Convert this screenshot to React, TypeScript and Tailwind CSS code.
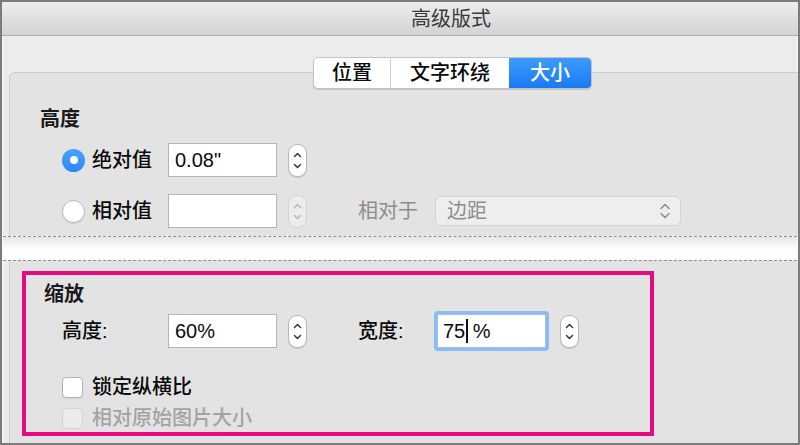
import React from "react";

const FONT = { fontFamily: '"Liberation Sans", "Noto Sans CJK SC", sans-serif' };

function Stepper({ disabled = false }: { disabled?: boolean }) {
  const stroke = disabled ? "#b9b9b9" : "#3a3a3a";
  return (
    <div
      className={`ml-[11px] flex h-[33px] w-[19px] items-center justify-center rounded-[9px] border ${
        disabled ? "border-[#d4d4d4] bg-[#ececec]" : "border-[#b9b9b9] bg-white shadow-[0_1px_1px_rgba(0,0,0,0.12)]"
      }`}
    >
      <svg width="11" height="25" viewBox="0 0 11 25" fill="none">
        <path d="M2.5 8.5 L5.5 5.5 L8.5 8.5" stroke={stroke} strokeWidth="1.5" strokeLinecap="round" strokeLinejoin="round" />
        <path d="M2.5 16.5 L5.5 19.5 L8.5 16.5" stroke={stroke} strokeWidth="1.5" strokeLinecap="round" strokeLinejoin="round" />
      </svg>
    </div>
  );
}

function TextBox({ children, disabled = false }: { children?: React.ReactNode; disabled?: boolean }) {
  return (
    <div
      className={`flex h-[34px] w-[109px] items-center border px-[6px] text-[20px] text-[#0a0a0a] ${
        disabled ? "border-[#d2d2d2] bg-[#f4f4f4]" : "border-[#b5b5b5] bg-white"
      }`}
    >
      {children}
    </div>
  );
}

export default function App() {
  return (
    <div
      className="flex h-[445px] w-[800px] flex-col overflow-hidden border-2 border-[#7b7b7b] bg-[#ececec]"
      style={FONT}
    >
      {/* Title bar */}
      <div className="flex h-[34px] shrink-0 items-center border-b border-[#b1b1b1] bg-gradient-to-b from-[#ededed] to-[#d3d3d3] pl-[409px] text-[20px] text-[#3a3a3a]">
        高级版式
      </div>

      {/* Body */}
      <div className="flex flex-1 flex-col border-x border-[#f8f8f8]">
        {/* Tabs */}
        <div className="relative z-10 flex pl-[310px] pt-[21px]">
          <div className="flex h-[32px] overflow-hidden rounded-[5px] border border-[#c2c2c2] bg-white text-[20px] font-medium text-[#0a0a0a] shadow-[0_1px_1px_rgba(0,0,0,0.15)]">
            <div className="flex w-[77px] items-center justify-center border-r border-[#d0d0d0]">位置</div>
            <div className="flex w-[118px] items-center justify-center">文字环绕</div>
            <div className="flex w-[82px] items-center justify-center bg-gradient-to-b from-[#3d9bfd] to-[#1979f4] text-white">
              大小
            </div>
          </div>
        </div>

        {/* Group box top part */}
        <div className="-mr-[20px] -mt-[17px] ml-[6px] h-[164px] shrink-0 rounded-tl-[6px] border border-b-0 border-[#cdcdcd] bg-[#e3e3e3] pl-[30px] pt-[34px]">
          <div className="h-[24px] text-[20px] font-semibold leading-[24px] text-[#1a1a1a]">高度</div>

          {/* Row 1 */}
          <div className="mt-[12px] flex h-[34px] items-center pl-[22px]">
            <div className="flex w-[106px] items-center">
              <div className="flex h-[23px] w-[23px] items-center justify-center rounded-full bg-gradient-to-b from-[#4aa3fd] to-[#2a86f6]">
                <div className="h-[8px] w-[8px] rounded-full bg-white" />
              </div>
              <span className="ml-[7px] text-[20px] font-medium text-[#0a0a0a]">绝对值</span>
            </div>
            <TextBox>0.08"</TextBox>
            <Stepper />
          </div>

          {/* Row 2 */}
          <div className="mt-[17px] flex h-[34px] items-center pl-[22px]">
            <div className="flex w-[106px] items-center">
              <div className="h-[23px] w-[23px] rounded-full border border-[#b8b8b8] bg-white shadow-[0_1px_1px_rgba(0,0,0,0.08)]" />
              <span className="ml-[7px] text-[20px] font-medium text-[#0a0a0a]">相对值</span>
            </div>
            <TextBox />
            <Stepper disabled />
            <span className="ml-[51px] w-[77px] text-[20px] text-[#8c8c8c]">相对于</span>
            <div className="flex h-[30px] w-[246px] items-center justify-between rounded-[6px] border border-[#d3d3d3] bg-[#eeeeee] pl-[11px] pr-[9px] text-[20px] text-[#8e8e8e]">
              <span>边距</span>
              <svg width="12" height="18" viewBox="0 0 12 18" fill="none">
                <path d="M2 6.5 L6 2.5 L10 6.5" stroke="#8e8e8e" strokeWidth="1.5" strokeLinecap="round" strokeLinejoin="round" />
                <path d="M2 11.5 L6 15.5 L10 11.5" stroke="#8e8e8e" strokeWidth="1.5" strokeLinecap="round" strokeLinejoin="round" />
              </svg>
            </div>
          </div>
        </div>

        {/* Cut band */}
        <div className="h-[25px] shrink-0 border-y border-dashed border-y-[#8d8d8d] bg-gradient-to-b from-[#e6e6e6] via-[#fdfdfd] to-white" />

        {/* Group box bottom part */}
        <div className="-mr-[20px] ml-[6px] flex-1 border-x border-[#cdcdcd] bg-[#e3e3e3] pl-[12px] pt-[10px]">
          <div className="h-[165px] w-[632px] border-4 border-[#e6097f] pl-[18px] pt-[7px]">
            <div className="h-[24px] text-[20px] font-semibold leading-[24px] text-[#1a1a1a]">缩放</div>

            <div className="mt-[8px] flex h-[34px] items-center pl-[18px]">
              <span className="w-[106px] text-[20px] font-medium text-[#0a0a0a]">高度:</span>
              <TextBox>60%</TextBox>
              <Stepper />
              <span className="ml-[51px] w-[76px] text-[20px] font-medium text-[#0a0a0a]">宽度:</span>
              <div className="rounded-[4px] bg-[#8dbaf2] p-[3px]">
                <div className="flex h-[34px] w-[109px] items-center border border-[#9dc3f0] bg-white px-[5px] text-[20px] text-[#0a0a0a]">
                  <span>75</span>
                  <span className="mx-[1px] h-[24px] w-[1.5px] bg-[#111]" />
                  <span className="ml-[4px]">%</span>
                </div>
              </div>
              <Stepper />
            </div>

            <div className="mt-[28px] flex h-[22px] items-center pl-[18px]">
              <div className="h-[21px] w-[21px] rounded-[4px] border border-[#b3b3b3] bg-white shadow-[0_1px_1px_rgba(0,0,0,0.08)]" />
              <span className="ml-[9px] text-[20px] font-medium text-[#0a0a0a]">锁定纵横比</span>
            </div>

            <div className="mt-[9px] flex h-[22px] items-center pl-[18px]">
              <div className="h-[21px] w-[21px] rounded-[4px] border border-[#d3d3d3] bg-[#ebebeb]" />
              <span className="ml-[9px] text-[20px] font-medium text-[#a3a3a3]">相对原始图片大小</span>
            </div>
          </div>
        </div>
      </div>
    </div>
  );
}
